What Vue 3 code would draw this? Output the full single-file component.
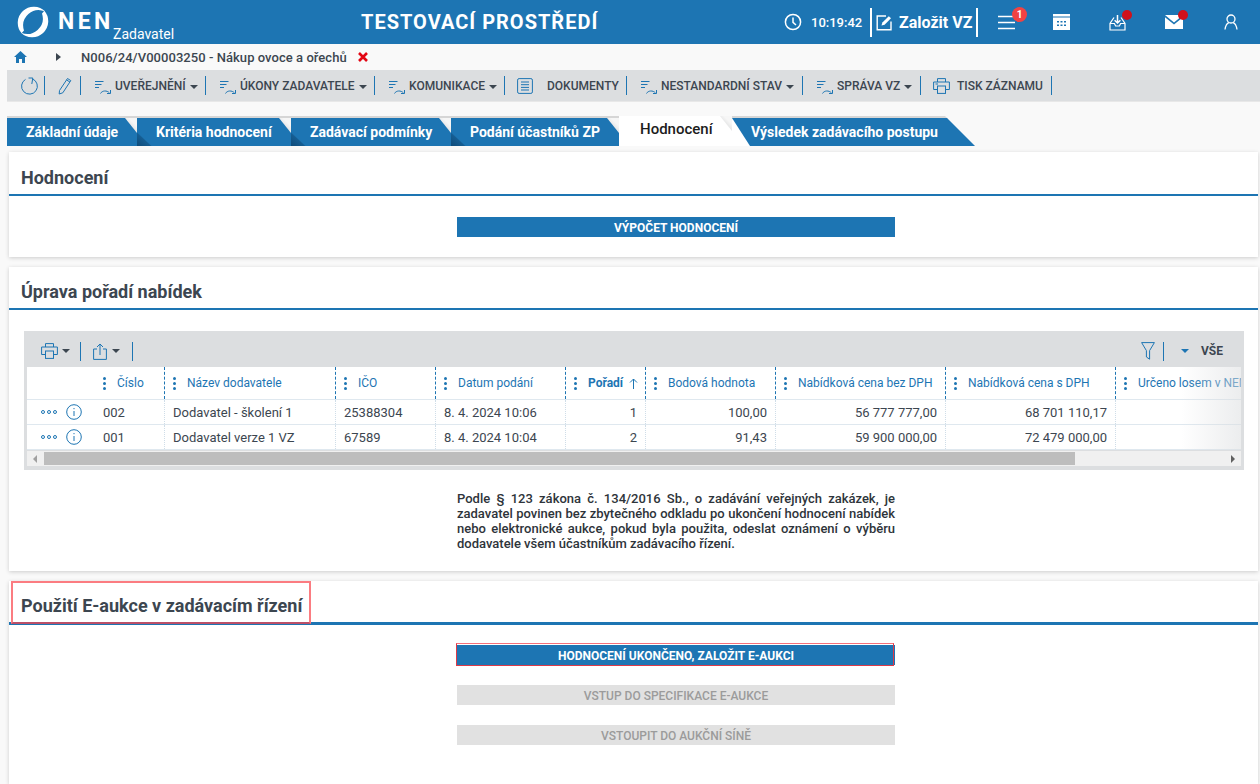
<script setup>
const tabs = [
  { label: 'Základní údaje', width: 130 },
  { label: 'Kritéria hodnocení', width: 154 },
  { label: 'Zadávací podmínky', width: 160 },
  { label: 'Podání účastníků ZP', width: 168 },
  { label: 'Hodnocení', width: 113, active: true },
  { label: 'Výsledek zadávacího postupu', width: 245, last: true }
]
const tools = [
  { label: 'UVEŘEJNĚNÍ', caret: true },
  { label: 'ÚKONY ZADAVATELE', caret: true },
  { label: 'KOMUNIKACE', caret: true },
  { label: 'DOKUMENTY', doc: true },
  { label: 'NESTANDARDNÍ STAV', caret: true },
  { label: 'SPRÁVA VZ', caret: true },
  { label: 'TISK ZÁZNAMU', print: true }
]
const cols = [
  { label: 'Číslo' },
  { label: 'Název dodavatele' },
  { label: 'IČO' },
  { label: 'Datum podání' },
  { label: 'Pořadí', sort: true },
  { label: 'Bodová hodnota' },
  { label: 'Nabídková cena bez DPH' },
  { label: 'Nabídková cena s DPH' },
  { label: 'Určeno losem v NEN' }
]
const rows = [
  ['002', 'Dodavatel - školení 1', '25388304', '8. 4. 2024 10:06', '1', '100,00', '56 777 777,00', '68 701 110,17', ''],
  ['001', 'Dodavatel verze 1 VZ', '67589', '8. 4. 2024 10:04', '2', '91,43', '59 900 000,00', '72 479 000,00', '']
]
const rightCols = [4, 5, 6, 7]
</script>

<template>
  <div class="page">
    <header class="top">
      <div class="brand">
        <svg class="logo" viewBox="0 0 32 32" width="32" height="32">
          <g fill="#fff">
            <path d="M4.7 27.3A16 16 0 0 1 28.2 5.6A15.5 15.5 0 0 0 7 24.5Q5.5 26 4.7 27.3Z" />
            <path d="M4.7 27.3A16 16 0 0 1 28.2 5.6A15.5 15.5 0 0 0 7 24.5Q5.5 26 4.7 27.3Z" transform="rotate(180 16 16)" />
          </g>
        </svg>
        <span class="nen">NEN</span>
        <span class="role">Zadavatel</span>
      </div>
      <div class="env">TESTOVACÍ PROSTŘEDÍ</div>
      <div class="top-right">
        <svg class="clock" viewBox="0 0 18 18" width="18" height="18" fill="none" stroke="#fff" stroke-width="1.5">
          <circle cx="9" cy="9" r="7.6" />
          <path d="M9 4.4V9.4L12 12" />
        </svg>
        <span class="time">10:19:42</span>
        <div class="create">
          <svg viewBox="0 0 17 17" width="17" height="17" fill="none" stroke="#fff" stroke-width="1.4">
            <path d="M10 2H1.2V15.8H15V7.5" />
            <path d="M5.5 11.6 6.4 8.6 12.8 2.2 15 4.3 8.6 10.7Z" fill="#fff" stroke="none" />
          </svg>
          <span>Založit VZ</span>
        </div>
        <div class="ico i-menu">
          <svg viewBox="0 0 17 15" width="17" height="15" stroke="#fff" stroke-width="1.6"><path d="M0 1.5H17M0 7.5H17M0 13.5H17" /></svg>
          <span class="badge">1</span>
        </div>
        <div class="ico i-cal">
          <svg viewBox="0 0 17 16" width="17" height="16">
            <path fill="#fff" d="M0 0H17V16H0Z" />
            <path fill="#1d75b3" d="M0 2.6H17V3.6H0ZM4 7H6V8.6H4ZM7.5 7H9.5V8.6H7.5ZM11 7H13V8.6H11ZM4 10.5H6V12.1H4ZM7.5 10.5H9.5V12.1H7.5ZM11 10.5H13V12.1H11Z" />
          </svg>
        </div>
        <div class="ico i-inbox">
          <svg viewBox="0 0 17 17" width="17" height="17" fill="none" stroke="#fff" stroke-width="1.2">
            <path d="M5 3.5 1 9.5V16H16V9.5L12 3.5" />
            <path d="M1 9.5H5.4L6.6 12H10.4L11.6 9.5H16" />
            <path d="M8.5 1V9M5.6 6.2 8.5 9 11.4 6.2" stroke-width="1.5" />
          </svg>
          <span class="dot"></span>
        </div>
        <div class="ico i-mail">
          <svg viewBox="0 0 18 14" width="18" height="14">
            <path fill="#fff" d="M0 0H18L9 7.4ZM0 2.2V14H18V2.2L9 9.6Z" />
          </svg>
          <span class="dot"></span>
        </div>
        <div class="ico i-user">
          <svg viewBox="0 0 14 16" width="14" height="16" fill="none" stroke="#fff" stroke-width="1.3">
            <circle cx="7" cy="5" r="4" />
            <path d="M1 15.5C1.6 11.6 3.6 9 5 8.6M13 15.5C12.4 11.6 10.4 9 9 8.6" />
          </svg>
        </div>
      </div>
    </header>

    <nav class="crumbs">
      <svg class="home" viewBox="0 0 13 12" width="13" height="12"><path fill="#1d75b3" d="M6.5 0 13 6H11V12H8V8H5V12H2V6H0Z" /></svg>
      <span class="crumb-arrow"></span>
      <span class="crumb-text">N006/24/V00003250 - Nákup ovoce a ořechů</span>
      <svg class="crumb-x" viewBox="0 0 10 10" width="10" height="10" stroke="#e30613" stroke-width="2.6"><path d="M1 1 9 9M9 1 1 9" /></svg>
    </nav>

    <div class="toolbar">
      <div class="tool tool-a">
        <svg viewBox="0 0 18 18" width="18" height="18" fill="none" stroke="#1d75b3" stroke-width="1">
          <path d="M5.5 2.4A7.9 7.9 0 1 0 12.4 1.9" />
          <path d="M8.5 1H12.8L11.8 7" />
        </svg>
      </div>
      <div class="tool tool-b">
        <svg viewBox="0 0 14 18" width="14" height="18" fill="none" stroke="#1d75b3" stroke-width="1">
          <path d="M1.5 13.5 9.5 1.5 12.8 3.6 4.8 15.8 1.2 17Z" />
          <path d="M8.6 3 11.9 5" />
        </svg>
      </div>
      <div v-for="t in tools" :key="t.label" class="tool tool-text">
        <svg v-if="t.doc" viewBox="0 0 16 16" width="16" height="16" fill="none" stroke="#1d75b3" class="tool-ico">
          <rect x="0.6" y="0.6" width="14.8" height="14.8" rx="1.5" />
          <path d="M4 4H12M4 6.7H12M4 9.4H12M4 12H12" />
        </svg>
        <svg v-else-if="t.print" viewBox="0 0 17 16" width="17" height="16" fill="none" stroke="#1d75b3" class="tool-ico">
          <path d="M4.5 4V.6H12.5V4M4 11.5H.6V4H16.4V11.5H13" />
          <rect x="4.5" y="8" width="8" height="7.4" />
          <path d="M2.5 6H5" />
        </svg>
        <svg v-else viewBox="0 0 16 17" width="16" height="17" fill="none" stroke="#1d75b3" class="tool-ico">
          <path d="M0 3.5H8.5M0 6.5H6.5M0 9.5H4" />
          <path d="M5.5 15.5C7 12.5 12 12 14.5 15M15.5 12V15.5H12" />
        </svg>
        <span class="tool-label">{{ t.label }}</span>
        <span v-if="t.caret" class="caret"></span>
      </div>
    </div>

    <div class="tabs">
      <div
        v-for="(t, i) in tabs"
        :key="t.label"
        class="tab"
        :class="{ active: t.active, last: t.last, first: i === 0 }"
        :style="{ width: t.width + 'px' }"
      >{{ t.label }}</div>
    </div>

    <section class="panel p1">
      <h2 class="title">Hodnocení</h2>
      <div class="actions a1">
        <div class="btn">VÝPOČET HODNOCENÍ</div>
      </div>
    </section>

    <section class="panel p2">
      <h2 class="title">Úprava pořadí nabídek</h2>
      <div class="grid-wrap">
        <div class="grid-bar">
          <svg viewBox="0 0 17 16" width="17" height="16" fill="none" stroke="#1d75b3">
            <path d="M4.5 4V.6H12.5V4M4 11.5H.6V4H16.4V11.5H13" />
            <rect x="4.5" y="8" width="8" height="7.4" />
          </svg>
          <span class="caret bar-caret"></span>
          <span class="bar-sep s1"></span>
          <svg viewBox="0 0 14 17" width="14" height="17" fill="none" stroke="#1d75b3">
            <path d="M4 6H.6V16.4H13.4V6H10" />
            <path d="M7 12V1M4 4 7 1 10 4" />
          </svg>
          <span class="caret bar-caret c2"></span>
          <span class="bar-sep"></span>
          <span class="grow"></span>
          <svg viewBox="0 0 14 18" width="14" height="18" fill="none" stroke="#1d75b3">
            <path d="M.6 .6H13.4L8.6 8.6V17.2L5.4 15V8.6Z" />
          </svg>
          <span class="bar-sep sep-r"></span>
          <span class="caret blue"></span>
          <span class="all">VŠE</span>
        </div>
        <div class="grid">
          <div class="grid-row head">
            <div class="cell c0"></div>
            <div v-for="c in cols" :key="c.label" class="cell th">
              <span class="grip"><i></i><i></i><i></i></span>
              <span class="th-label" :class="{ sorted: c.sort }">{{ c.label }}</span>
              <svg v-if="c.sort" class="sort" viewBox="0 0 9 11" width="9" height="11" fill="none" stroke="#1d75b3"><path d="M4.5 11V1M1 4.5 4.5 1 8 4.5" /></svg>
            </div>
          </div>
          <div v-for="r in rows" :key="r[0]" class="grid-row body">
            <div class="cell c0">
              <span class="more"><i></i><i></i><i></i></span>
              <svg viewBox="0 0 16 16" width="16" height="16" fill="none" stroke="#1d75b3">
                <circle cx="8" cy="8" r="7.3" />
                <path d="M8 7V12M8 4V5.2" />
              </svg>
            </div>
            <div
              v-for="(v, i) in r"
              :key="i"
              class="cell td"
              :class="{ right: rightCols.includes(i) }"
            >{{ v }}</div>
          </div>
          <div class="fade"></div>
        </div>
        <div class="scroll">
          <span class="arrow left"></span>
          <span class="thumb"></span>
          <span class="arrow rightward"></span>
        </div>
      </div>
      <p class="note">Podle § 123 zákona č. 134/2016 Sb., o zadávání veřejných zakázek, je zadavatel povinen bez zbytečného odkladu po ukončení hodnocení nabídek nebo elektronické aukce, pokud byla použita, odeslat oznámení o výběru dodavatele všem účastníkům zadávacího řízení.</p>
    </section>

    <section class="panel p3">
      <h2 class="title">Použití E-aukce v zadávacím řízení</h2>
      <span class="mark mark-title"></span>
      <div class="actions a3">
        <div class="btn marked">HODNOCENÍ UKONČENO, ZALOŽIT E-AUKCI</div>
        <div class="btn off">VSTUP DO SPECIFIKACE E-AUKCE</div>
        <div class="btn off">VSTOUPIT DO AUKČNÍ SÍNĚ</div>
      </div>
    </section>
  </div>
</template>

<style>
html, body { margin: 0; height: 784px; overflow: hidden; background: #f9f9f9; }
</style>

<style scoped>
.page { width: 1260px; height: 784px; overflow: hidden; background: #f9f9f9; font-family: Roboto, "Liberation Sans", sans-serif; color: #3c4650; }
.top { height: 44px; background: #1d75b3; color: #fff; display: flex; align-items: center; }
.brand { display: flex; align-items: center; width: 361px; padding-left: 17px; box-sizing: border-box; height: 44px; }
.logo { flex: none; }
.nen { font-size: 23px; font-weight: 700; letter-spacing: 3.4px; margin-left: 9px; line-height: 44px; width: 55px; flex: none; white-space: nowrap; }
.role { font-size: 14px; align-self: flex-end; line-height: 17px; margin-bottom: 1px; }
.env { font-size: 20px; font-weight: 700; letter-spacing: 1px; width: 423px; white-space: nowrap; }
.top-right { display: flex; align-items: center; height: 44px; position: relative; }
.time { font-size: 13px; font-weight: 500; margin-left: 9px; width: 59px; white-space: nowrap; }
.create { display: flex; align-items: center; gap: 6px; height: 29px; width: 108px; box-sizing: border-box; padding-left: 4px; border-left: 2px solid #fff; border-right: 2px solid #fff; font-size: 16px; font-weight: 700; white-space: nowrap; }
.ico { position: relative; display: flex; align-items: center; height: 44px; }
.i-menu { margin-left: 20px; }
.i-cal { margin-left: 38px; }
.i-inbox { margin-left: 39px; }
.i-mail { margin-left: 39px; }
.i-user { margin-left: 41px; }
.badge { position: absolute; left: 14px; top: 7px; width: 15px; height: 15px; border-radius: 50%; background: #f04343; font-size: 10px; font-weight: 700; text-align: center; line-height: 15px; }
.dot { position: absolute; left: 13px; top: 10px; width: 10px; height: 10px; border-radius: 50%; background: #d0111b; }
.crumbs { height: 26px; display: flex; align-items: center; padding-left: 14px; }
.crumb-arrow { width: 0; height: 0; border-left: 5px solid #3c4650; border-top: 4px solid transparent; border-bottom: 4px solid transparent; margin-left: 29px; }
.crumb-text { font-size: 13px; font-weight: 500; letter-spacing: .05px; margin-left: 20px; white-space: nowrap; }
.crumb-x { margin-left: 11px; }
.toolbar { margin-left: 7px; height: 32px; background: #dcdee0; border-bottom: 1px solid #e8e8e8; box-sizing: border-box; display: grid; grid-template-columns: 38px 36px 125px 169px 130px 122px 176px 118px 131px; align-items: center; }
.tool { height: 19px; display: flex; align-items: center; border-right: 1px solid #1d75b3; box-sizing: border-box; white-space: nowrap; }
.tool-a { padding-left: 13px; }
.tool-b { padding-left: 13px; }
.tool-text { padding-left: 14px; min-width: 0; overflow: visible; }
.tool-ico { flex: none; margin-top: 2px; }
.tool-label { font-size: 12px; font-weight: 500; margin-left: 4px; color: #3c4650; }
.tool-text:nth-child(6) { padding-left: 12px; }
.tool-text:nth-child(6) .tool-label { margin-left: 14px; }
.tool-text:nth-child(6) .tool-ico { margin-top: 0; }
.tool-text:nth-child(9) { padding-left: 12px; }
.tool-text:nth-child(9) .tool-ico { margin-top: 0; }
.tool-text:nth-child(9) .tool-label { margin-left: 7px; }
.caret { display: inline-block; width: 0; height: 0; border-left: 4px solid transparent; border-right: 4px solid transparent; border-top: 4.5px solid #3c4650; margin-left: 4px; margin-top: 2px; flex: none; }
.tabs { display: flex; margin: 14px 0 0 7px; height: 30px; position: relative; z-index: 2; }
.tab { position: relative; height: 28px; margin-top: 2px; background: #1d75b3; color: #fff; font-size: 14px; font-weight: 700; line-height: 28px; padding-left: 19px; box-sizing: border-box; box-shadow: 0 -2px 0 #d6d6d6; white-space: nowrap; flex: none; }
.tab::after { content: ""; position: absolute; right: 0; top: 0; width: 12px; height: 15px; background: linear-gradient(45deg, #c4c6c8, #f6f6f6 70%); clip-path: polygon(0 0, 100% 0, 100% 100%); }
.tab:not(.first)::before { content: ""; position: absolute; left: 0; bottom: 0; width: 15px; height: 14px; background: linear-gradient(to top right, #0f4c7a 0, #155d92 45%, #1d75b3 52%); clip-path: polygon(0 0, 100% 100%, 0 100%); }
.tab.active { background: #fff; color: #1c1c1c; font-weight: 500; font-size: 15px; padding-left: 21px; margin-top: 0; height: 30px; line-height: 26px; box-shadow: none; }
.tab.active::before { display: none; }
.tab.last { clip-path: polygon(0 -2px, calc(100% - 32px) -2px, calc(100% - 2px) 28px, 0 28px); padding-left: 19px; }
.tab.last::after { display: none; }
.tab.last::before { width: 18px; height: 28px; background: #fff; clip-path: polygon(0 0, 100% 100%, 0 100%); }
.panel { position: relative; margin-left: 9px; width: 1249px; background: #fff; box-shadow: 0 1px 4px rgba(0,0,0,.18); }
.title { margin: 0; font-size: 18px; font-weight: 700; line-height: 22px; padding: 14px 12px 5px; border-bottom: 2px solid #1d75b3; color: #3c4650; }
.p1 { margin-top: 6px; height: 105px; }
.p1 .title { padding-top: 15px; }
.p2 { margin-top: 10px; height: 304px; }
.p3 { margin-top: 10px; height: 203px; }
.p3 .title { border-bottom-width: 3px; }
.actions { display: flex; flex-direction: column; align-items: flex-start; gap: 20px; padding-left: 448px; }
.a1 { padding-top: 21px; }
.a3 { padding-top: 20px; }
.btn { position: relative; width: 438px; height: 20px; background: #1d75b3; color: #fff; font-size: 12px; font-weight: 700; line-height: 22px; text-align: center; white-space: nowrap; }
.btn.off { background: #e1e1e1; color: #9b9b9b; font-weight: 500; }
.btn.marked::after { content: ""; position: absolute; left: -1px; right: 1px; top: -2px; bottom: -1px; border: 1px solid #dc3a48; border-top-color: #f4707a; }
.mark { position: absolute; pointer-events: none; }
.mark-title { left: 2px; top: 0; width: 300px; height: 43px; box-sizing: border-box; border: 2px solid #fb7c81; border-bottom-color: #bb5068; }
.grid-wrap { margin: 21px 0 0 15px; width: 1220px; height: 139px; background: #dcdee0; padding: 0 3px; box-sizing: border-box; }
.grid-bar { height: 36px; box-sizing: border-box; display: flex; align-items: center; padding: 4px 18px 0 14px; }
.grow { flex: 1; }
.bar-caret { margin-left: 4px; margin-top: 0; }
.bar-caret.c2 { margin-left: 5px; }
.bar-sep { width: 1px; height: 19px; background: #1d75b3; margin: 0 12px; }
.bar-sep.s1 { margin-left: 10px; }
.sep-r { margin: 0 17px 0 8px; }
.caret.blue { border-top-color: #1d75b3; margin: 0; }
.all { font-size: 12px; font-weight: 700; margin-left: 12px; }
.grid { position: relative; width: 1214px; overflow: hidden; background: #fff; }
.grid-row { display: grid; grid-template-columns: 68px 70px 171px 100px 130px 80px 130px 170px 170px 126px; }
.head { height: 33px; border-bottom: 1px solid #dfe8ef; box-sizing: border-box; }
.body { height: 25px; border-bottom: 1px solid #dfe8ef; box-sizing: border-box; }
.cell { display: flex; align-items: center; min-width: 0; white-space: nowrap; box-sizing: border-box; }
.th { border-right: 1px dashed #1d75b3; padding-left: 6px; font-size: 12px; color: #1d75b3; overflow: hidden; }
.head .th:last-child { border-right: none; }
.grip { display: flex; flex-direction: column; gap: 2px; width: 3px; margin-right: 11px; margin-left: 2px; flex: none; }
.grip i { width: 3px; height: 3px; border-radius: 50%; background: #1d75b3; }
.sorted { font-weight: 700; }
.sort { margin-left: 6px; flex: none; }
.c0 { padding-left: 14px; gap: 9px; }
.more { display: flex; gap: 2px; }
.more i { width: 4px; height: 4px; box-sizing: border-box; border: 1px solid #1d75b3; border-radius: 50%; }
.td { font-size: 13px; color: #3c4650; padding: 0 8px; border-right: 1px dotted #cfdde8; }
.td.right { justify-content: flex-end; }
.td:last-child { border-right: none; }
.fade { position: absolute; right: 0; top: 0; bottom: 0; width: 60px; background: linear-gradient(to right, rgba(220,222,224,0), rgba(220,222,224,.55)); pointer-events: none; }
.scroll { position: relative; height: 15px; margin-top: 1px; width: 1214px; background: #f0f0f0; display: flex; align-items: center; }
.thumb { position: absolute; left: 17px; width: 1031px; height: 13px; background: #bdbdbd; }
.arrow { position: absolute; width: 0; height: 0; border-top: 4px solid transparent; border-bottom: 4px solid transparent; }
.arrow.left { left: 6px; border-right: 4px solid #a0a0a0; }
.arrow.rightward { right: 6px; border-left: 4px solid #606060; }
.note { margin: 21px 0 0 448px; width: 438px; font-size: 13px; font-weight: 500; line-height: 15px; text-align: justify; color: #2e343a; }
</style>
